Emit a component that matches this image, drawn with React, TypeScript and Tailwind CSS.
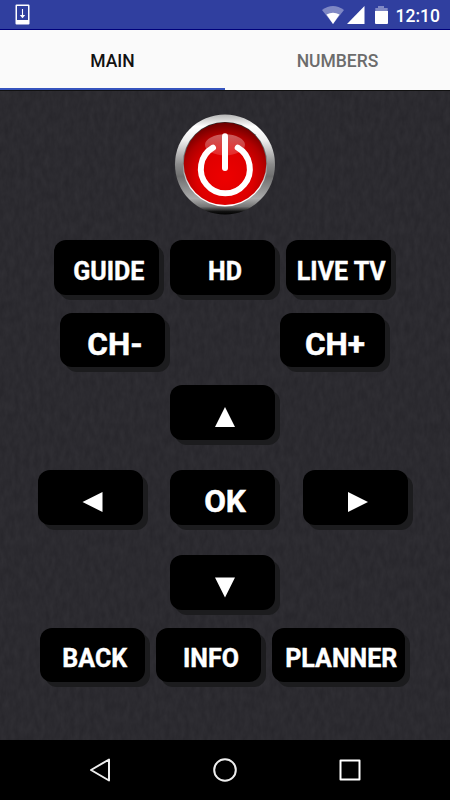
import React from "react";

type KeyProps = {
  label: string;
  children?: React.ReactNode;
  wide?: boolean;
  large?: boolean;
  short?: boolean;
};

/* A remote key with a hard drop shadow to the lower right. */
function Key({ label, children, wide, large, short }: KeyProps) {
  return (
    <button
      aria-label={label}
      className={`flex shrink-0 items-center justify-center whitespace-nowrap rounded-[12px] bg-black pl-[5px] font-bold leading-none text-white shadow-[5px_5px_0_#1c1c1e] ${
        wide ? "w-[133px]" : "w-[105px]"
      } ${short ? "h-[54px]" : "h-[55px]"} ${
        large
          ? "pt-[9px] text-[31.5px] [-webkit-text-stroke:0.5px_white]"
          : "pt-[7px] text-[25px] [-webkit-text-stroke:0.4px_white]"
      }`}
    >
      {children ?? label}
    </button>
  );
}

function Arrow({ points }: { points: string }) {
  return (
    <svg width="24" height="24" viewBox="0 0 24 24" className="block" fill="#fff">
      <polygon points={points} />
    </svg>
  );
}

function PowerButton() {
  return (
    <svg width="100" height="101" viewBox="0 0 100 101" className="block overflow-visible">
      <defs>
        <linearGradient id="rim" x1="0" y1="0" x2="0" y2="1">
          <stop offset="0" stopColor="#b4b4b4" />
          <stop offset="0.12" stopColor="#fff" />
          <stop offset="0.26" stopColor="#eee" />
          <stop offset="0.5" stopColor="#8a8a8a" />
          <stop offset="0.62" stopColor="#6f6f6f" />
          <stop offset="0.84" stopColor="#aaa" />
          <stop offset="0.92" stopColor="#777" />
          <stop offset="0.97" stopColor="#111" />
          <stop offset="1" stopColor="#000" />
        </linearGradient>
        <linearGradient id="edge" x1="0" y1="0" x2="0" y2="1">
          <stop offset="0" stopColor="#222" />
          <stop offset="0.5" stopColor="#888" />
          <stop offset="0.8" stopColor="#fff" />
          <stop offset="1" stopColor="#fff" />
        </linearGradient>
        <radialGradient id="face" cx="0.5" cy="0.66" r="0.68">
          <stop offset="0" stopColor="#ee0000" />
          <stop offset="0.5" stopColor="#de0000" />
          <stop offset="0.75" stopColor="#b00000" />
          <stop offset="1" stopColor="#600000" />
        </radialGradient>
        <linearGradient id="gloss" x1="0" y1="0" x2="0" y2="1">
          <stop offset="0" stopColor="#fff" stopOpacity="0.36" />
          <stop offset="1" stopColor="#fff" stopOpacity="0.16" />
        </linearGradient>
      </defs>
      <circle cx="50" cy="50.5" r="50" fill="url(#rim)" />
      <circle cx="50" cy="50.2" r="42.3" fill="url(#edge)" />
      <circle cx="50" cy="49.8" r="41.3" fill="url(#face)" />
      <ellipse cx="50" cy="30.8" rx="20" ry="10.5" fill="url(#gloss)" />
      <path d="M38 33.7A24.5 24.5 0 1 0 62.7 33.7" fill="none" stroke="#fff" strokeWidth="6" strokeLinecap="round" />
      <path d="M50 22.3V54" fill="none" stroke="#fff" strokeWidth="6" strokeLinecap="round" />
    </svg>
  );
}

function StatusBar() {
  return (
    <header className="flex h-[30px] shrink-0 items-center border-b border-[#00007a] bg-[#303f9f] pl-[15px] pr-[10px]">
      <svg width="15" height="21" viewBox="0 0 15 21" className="block">
        <path fillRule="evenodd" fill="#fff" d="M1.5 .5H13.5Q14.5 .5 14.5 1.5V19.5Q14.5 20.5 13.5 20.5H1.5Q.5 20.5 .5 19.5V1.5Q.5 .5 1.5 .5ZM2 3V16H13V3Z" />
        <path d="M2 2.5H13" stroke="#303f9f" strokeWidth="1" />
        <path d="M7.5 5V12" stroke="#fff" strokeWidth="1.1" />
        <path d="M4.8 11H10.2L7.5 14.3Z" fill="#fff" />
      </svg>
      <div className="ml-auto flex items-center">
        <svg width="22" height="20" viewBox="0 0 22 20" className="block">
          <path d="M0 5Q11-3 22 5L11 19Z" fill="#7f88c4" />
          <path d="M4.5 9.5Q11 6 17.5 9.5L11 19Z" fill="#fff" />
        </svg>
        <svg width="18" height="20" viewBox="0 0 18 20" className="ml-[3px] block">
          <path d="M0 19L17.5 1V19Z" fill="#fff" />
        </svg>
        <svg width="13" height="20" viewBox="0 0 13 20" className="ml-[10px] block">
          <path d="M.3 6V3H3V1H9V3H12.7V6Z" fill="#7f88c4" />
          <path d="M0 6H13V18Q13 19 12 19H1Q0 19 0 18Z" fill="#fff" />
        </svg>
        <span className="ml-[8px] mt-[4px] text-[17.5px] font-medium leading-none text-white">12:10</span>
      </div>
    </header>
  );
}

export default function App() {
  return (
    <div className="flex h-[800px] w-[450px] flex-col overflow-hidden bg-[#2b2a2f] font-['Roboto','Noto_Sans',sans-serif]">
      <StatusBar />
      <nav className="grid h-[60px] shrink-0 grid-cols-2 bg-[#fafafa] text-[17.5px] font-medium leading-none">
        <button className="flex items-center justify-center border-b-2 border-[#3553bd] pt-[5px] text-[#111]">MAIN</button>
        <button className="flex items-center justify-center pt-[3px] text-[#6c6c6c]">NUMBERS</button>
      </nav>
      <main className="relative isolate flex h-[650px] shrink-0 flex-col pt-[24px]">
        <svg className="absolute inset-0 -z-10" width="450" height="650">
          <filter id="fabric" x="0" y="0" width="100%" height="100%" colorInterpolationFilters="sRGB">
            <feTurbulence type="fractalNoise" baseFrequency="0.2 0.09" numOctaves="3" seed="8" />
            <feColorMatrix values="0.045 0 0 0 0.148  0.045 0 0 0 0.144  0.045 0 0 0 0.164  0 0 0 0 1" />
          </filter>
          <rect width="450" height="650" filter="url(#fabric)" />
          <path d="M0 .5H450" stroke="#111" />
        </svg>
        <div className="pl-[175px]">
          <PowerButton />
        </div>
        <div className="mt-[25px] flex gap-[11.25px] pl-[53.75px]">
          <Key label="GUIDE" />
          <Key label="HD" />
          <Key label="LIVE TV" />
        </div>
        <div className="mt-[18px] flex gap-[115px] pl-[60px]">
          <Key label="CH-" large short />
          <Key label="CH+" large short />
        </div>
        <div className="mt-[18px] flex pl-[170px]">
          <Key label="Up">
            <Arrow points="2,23 12,3 22,23" />
          </Key>
        </div>
        <div className="mt-[30px] flex gap-[27.5px] pl-[37.5px]">
          <Key label="Left">
            <Arrow points="21.5,3 1.5,13 21.5,23" />
          </Key>
          <Key label="OK" large />
          <Key label="Right">
            <Arrow points="2,3 22,13 2,23" />
          </Key>
        </div>
        <div className="mt-[30px] flex pl-[170px]">
          <Key label="Down">
            <Arrow points="2,3.5 22,3.5 12,23.5" />
          </Key>
        </div>
        <div className="mt-[18px] flex gap-[11.25px] pl-[39.75px]">
          <Key label="BACK" short />
          <Key label="INFO" short />
          <Key label="PLANNER" wide short />
        </div>
      </main>
      <footer className="flex h-[60px] shrink-0 items-center bg-black pl-[88px]">
        <svg width="24" height="26" viewBox="0 0 24 26" className="block" fill="none" stroke="#eee" strokeWidth="2" strokeLinejoin="round">
          <path d="M21 2.5V23.5L3 13Z" />
        </svg>
        <svg width="26" height="26" viewBox="0 0 26 26" className="ml-[100px] block" fill="none" stroke="#eee" strokeWidth="2">
          <circle cx="13" cy="13" r="10.8" />
        </svg>
        <svg width="24" height="26" viewBox="0 0 24 26" className="ml-[100px] block" fill="none" stroke="#fff" strokeWidth="2" strokeLinejoin="round">
          <rect x="2.5" y="3.5" width="19" height="19" />
        </svg>
      </footer>
    </div>
  );
}
